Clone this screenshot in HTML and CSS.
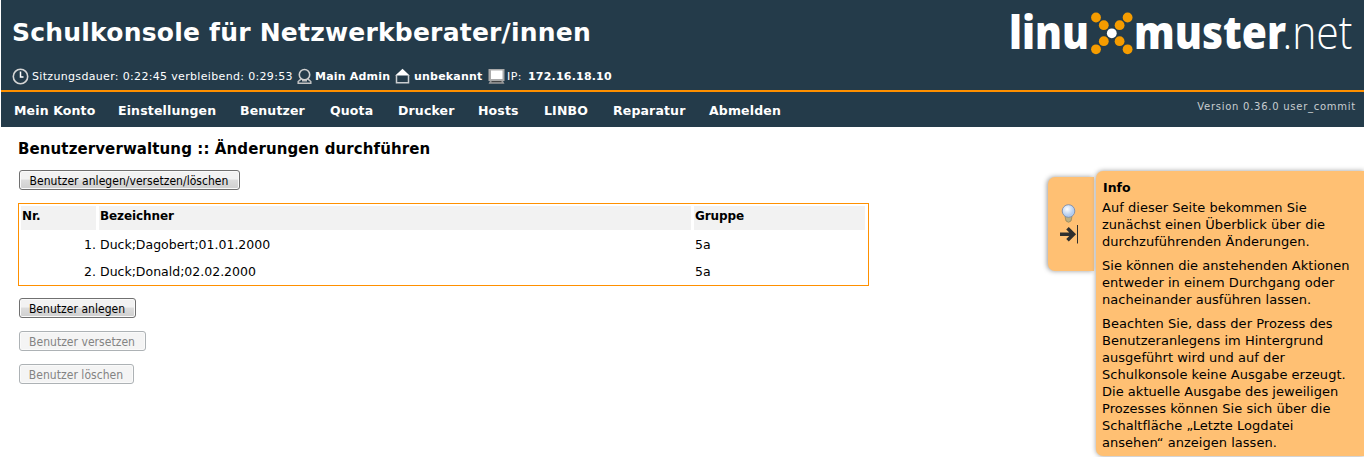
FILE: index.html
```html
<!DOCTYPE html>
<html lang="de">
<head>
<meta charset="utf-8">
<title>Schulkonsole für Netzwerkberater/innen</title>
<link rel="stylesheet" href="styles.css">
</head>
<body>
<header class="header">
  <div class="banner">
    <div class="banner-left">
      <h1 class="title">Schulkonsole für Netzwerkberater/innen</h1>
      <div class="status">
        <svg class="ico-clock" width="17" height="17" viewBox="0 0 17 17"><circle cx="8.5" cy="8.5" r="7.2" fill="none" stroke="#d6d6d6" stroke-width="1.6"/><path d="M8.5 3.5V9H11.5" fill="none" stroke="#fff" stroke-width="1.5"/></svg>
        <span class="session">Sitzungsdauer: 0:22:45 verbleibend: 0:29:53</span>
        <svg class="ico-user" width="15" height="17" viewBox="0 0 15 17"><circle cx="7.5" cy="6.7" r="5.2" fill="none" stroke="#d0d0d0" stroke-width="1.6"/><path d="M4 11.2L1.2 13.5V15.3H13.8V13.5L11 11.2M5 12.8H10" fill="none" stroke="#c4c4c4" stroke-width="1.5"/></svg>
        <b class="admin">Main Admin</b>
        <svg class="ico-home" width="15" height="17" viewBox="0 0 15 17"><path d="M.3 7.5L7.5 .8L14.7 7.5Z" fill="#fff"/><path d="M1.5 7V14.8H13.5V7" fill="none" stroke="#c9cdd0" stroke-width="1.5"/></svg>
        <b class="room">unbekannt</b>
        <svg class="ico-pc" width="17" height="17" viewBox="0 0 17 17"><rect x=".5" y="1" width="16" height="12" fill="#aaa"/><rect x="3" y="2.5" width="11.5" height="8.5" fill="#fff"/><path d="M2 13L.5 15.7H16.5L15 13Z" fill="#999"/><path d="M3.5 13.6H13.5" stroke="#444" stroke-width="1.2"/></svg>
        <span class="iplabel">IP:</span><b class="ip">172.16.18.10</b>
      </div>
    </div>
    <svg class="logo" width="350" height="66" viewBox="0 -7 350 66">
      <g class="logo-bold"><text x="4" y="42" textLength="80" lengthAdjust="spacingAndGlyphs">linu</text><text x="129" y="42" textLength="152" lengthAdjust="spacingAndGlyphs">muster</text></g>
      <text class="logo-light" x="277.5" y="42" textLength="70" lengthAdjust="spacingAndGlyphs">.net</text>
      <g fill="#f59c00"><circle cx="91" cy="10.5" r="4.9"/><circle cx="98.8" cy="18.2" r="4.9"/><circle cx="122.6" cy="10.5" r="4.9"/><circle cx="114.6" cy="18.2" r="4.9"/><circle cx="98.8" cy="34.2" r="4.9"/><circle cx="91" cy="42.3" r="4.9"/><circle cx="114.6" cy="34.2" r="4.9"/><circle cx="122.6" cy="42.3" r="4.9"/></g>
      <circle cx="106.8" cy="26.3" r="4.9" fill="#fff"/>
    </svg>
  </div>
  <div class="navbar">
    <nav class="nav"><a>Mein Konto</a><a>Einstellungen</a><a>Benutzer</a><a>Quota</a><a>Drucker</a><a>Hosts</a><a>LINBO</a><a>Reparatur</a><a>Abmelden</a></nav>
    <span class="version">Version 0.36.0 user_commit</span>
  </div>
</header>
<div class="page">
  <main class="content">
    <h2 class="heading">Benutzerverwaltung :: Änderungen durchführen</h2>
    <button class="btn btn-all">Benutzer anlegen/versetzen/löschen</button>
    <div class="list">
      <div class="row head"><span>Nr.</span><span>Bezeichner</span><span>Gruppe</span></div>
      <div class="row"><span class="num">1.</span><span>Duck;Dagobert;01.01.2000</span><span>5a</span></div>
      <div class="row"><span class="num">2.</span><span>Duck;Donald;02.02.2000</span><span>5a</span></div>
    </div>
    <button class="btn btn-add">Benutzer anlegen</button>
    <button class="btn btn-move" disabled>Benutzer versetzen</button>
    <button class="btn btn-del" disabled>Benutzer löschen</button>
  </main>
  <aside class="info">
    <div class="tab">
      <svg width="24" height="46" viewBox="0 0 24 46">
        <defs><radialGradient id="bulb" cx=".4" cy=".35"><stop offset="0" stop-color="#fff"/><stop offset="1" stop-color="#b4cdf0"/></radialGradient></defs>
        <path d="M7 12.5L8 17Q10.5 19.5 13 17L14 12.5Z" fill="#bcae82" stroke="#8f8358" stroke-width=".7"/>
        <circle cx="10.5" cy="7" r="6.3" fill="url(#bulb)" stroke="#7287aa" stroke-width=".8"/>
        <path d="M2 30.3H15M9.5 24.3L15.5 30.3L9.5 36.3" fill="none" stroke="#2e2e2e" stroke-width="3.6"/>
        <path d="M19.5 21V39.5" stroke="#2e2e2e" stroke-width="1"/>
      </svg>
    </div>
    <div class="panel">
      <h3>Info</h3>
      <p>Auf dieser Seite bekommen Sie<br>zunächst einen Überblick über die<br>durchzuführenden Änderungen.</p>
      <p>Sie können die anstehenden Aktionen<br>entweder in einem Durchgang oder<br>nacheinander ausführen lassen.</p>
      <p>Beachten Sie, dass der Prozess des<br>Benutzeranlegens im Hintergrund<br>ausgeführt wird und auf der<br>Schulkonsole keine Ausgabe erzeugt.<br>Die aktuelle Ausgabe des jeweiligen<br>Prozesses können Sie sich über die<br>Schaltfläche „Letzte Logdatei<br>ansehen“ anzeigen lassen.</p>
    </div>
  </aside>
</div>
</body>
</html>
```
FILE: styles.css
```css
* { box-sizing: border-box; }
body { margin: 0; height: 457px; overflow: hidden; background: #fff; color: #000; font-family: "DejaVu Sans", sans-serif; font-size: 12px; }
.header { margin-left: 1px; height: 127px; background: #243b4a; color: #fff; }
.banner { height: 92px; border-bottom: 2px solid #ff9000; display: flex; justify-content: space-between; }
.banner-left { padding-left: 11px; }
.title { margin: 17px 0 0; font-size: 25px; line-height: 32px; font-weight: bold; letter-spacing: 0.22px; white-space: nowrap; }
.status { display: flex; align-items: center; height: 20px; margin-top: 17px; font-size: 11px; white-space: nowrap; }
.status svg { flex: none; }
.status b { letter-spacing: 0.2px; }
.session { width: 262px; margin-left: 3px; letter-spacing: 0.33px; }
.ico-user { margin-left: 3px; }
.admin { width: 79px; margin-left: 3px; }
.ico-home { margin-left: 1px; }
.room { width: 70px; margin-left: 4px; }
.ico-pc { margin-left: 4px; }
.iplabel { width: 21px; margin-left: 2px; letter-spacing: 0.4px; }
.logo { margin: 0 9px 0 0; flex: none; }
.logo-bold { fill: #fff; font: 800 46px "Open Sans", sans-serif; }
.logo-light { fill: #fff; font: 300 46px "Open Sans", sans-serif; }
.navbar { display: flex; justify-content: space-between; padding: 11px 8px 0 13px; }
.nav { display: grid; grid-template-columns: 104px 122px 90px 68px 80px 66px 69px 96px 90px; font-size: 12.5px; line-height: 15px; letter-spacing: 0.15px; font-weight: bold; }
.version { color: #c8cdd0; font-size: 10px; line-height: 5px; letter-spacing: 0.74px; padding-top: 1px; white-space: nowrap; }
.page { display: flex; justify-content: space-between; }
.content { width: 852px; padding: 12px 0 0 18px; display: flex; flex-direction: column; align-items: flex-start; }
.heading { margin: 0; font-size: 15px; line-height: 20px; letter-spacing: 0.1px; white-space: nowrap; }
.btn { height: 20px; margin: 0 0 13px 1px; padding: 2px 1px 0 0; border: 1px solid #707070; border-radius: 3px; background: linear-gradient(#f2f2f2 0 45%, #dcdcdc 50%, #cfcfcf); box-shadow: inset 0 0 0 1px #fafafa; font: 12px/16px "DejaVu Sans Condensed", "DejaVu Sans", sans-serif; font-stretch: condensed; letter-spacing: 0.04px; color: #000; white-space: nowrap; }
.btn:disabled { border-color: #adb2b5; background: #f4f4f4; color: #838383; }
.btn-all { width: 221px; margin-top: 11px; }
.btn-add { width: 117px; }
.btn-move { width: 127px; }
.btn-del { width: 115px; }
.list { width: 851px; height: 83px; margin-bottom: 12px; border: 1px solid #ff9000; padding: 2px; }
.row { display: grid; grid-template-columns: 75px 592px 171px; column-gap: 3px; height: 27px; line-height: 27px; font-size: 12.5px; }
.row.head { height: 24px; margin-bottom: 1px; font-size: 12px; letter-spacing: -0.1px; font-weight: bold; line-height: 21px; }
.head span { background: #f2f2f2; }
.row span { padding-left: 1px; }
.num { text-align: right; }
.info { display: flex; align-items: flex-start; padding-top: 44px; }
.tab { width: 46px; height: 94px; margin: 6px 2px 0 0; padding: 27px 0 0 10px; background: #ffc073; border-radius: 7px 0 0 7px; box-shadow: -1px 0 5px #999; }
.panel { width: 268px; height: 285px; padding: 8px 0 0 6px; background: #ffc073; border-radius: 7px 0 0 7px; box-shadow: 0 0 5px #999; white-space: nowrap; }
.panel h3 { margin: 0 0 2px 1px; font-size: 12.5px; line-height: 18px; }
.panel p { margin: 0 0 7px; font-size: 13px; line-height: 17px; letter-spacing: 0.03px; }
```
